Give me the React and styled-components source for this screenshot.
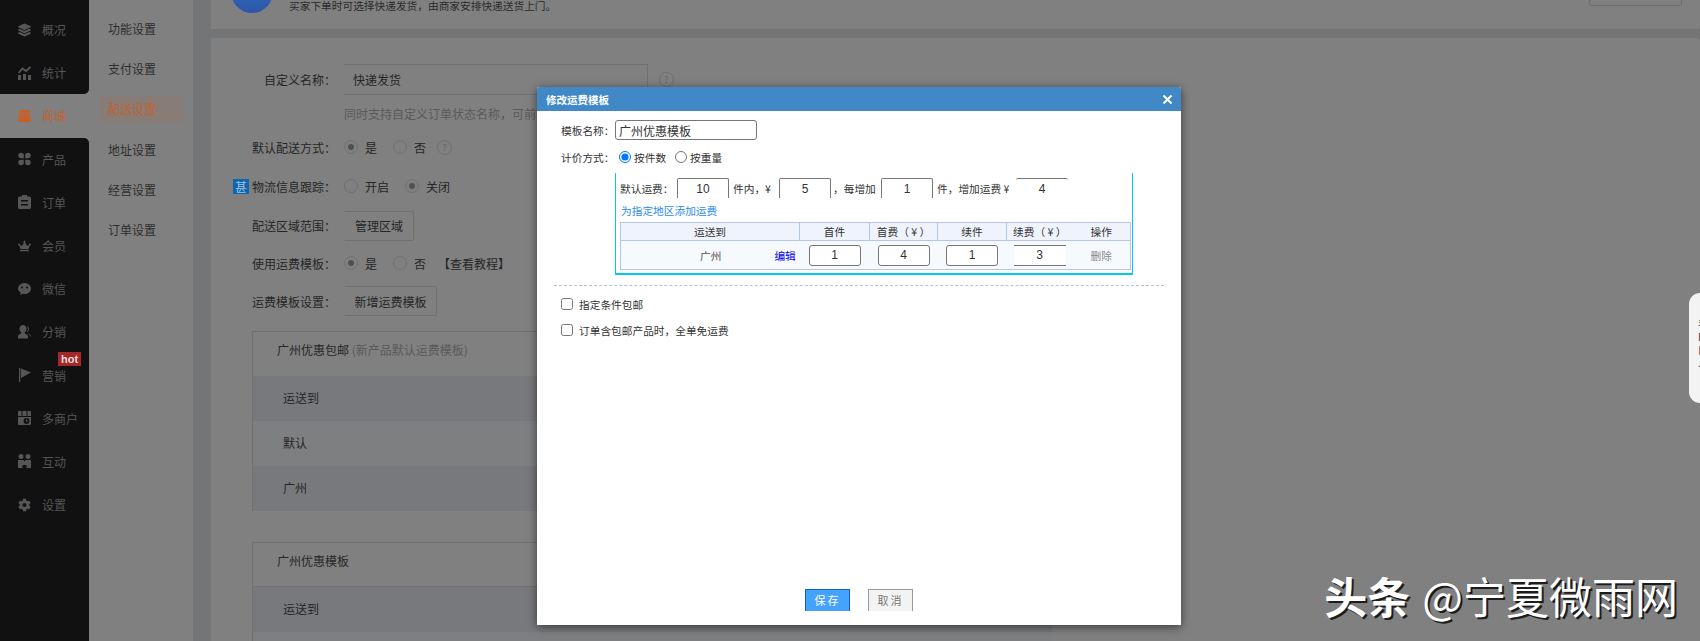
import React from 'react'
import styled, { createGlobalStyle } from 'styled-components'
import { FaLayerGroup, FaCrown, FaCog } from 'react-icons/fa'

const Global = createGlobalStyle`
  html, body { margin:0; padding:0; height:100%; overflow:hidden; background:#808080; }
  body { font-family:"Noto Sans CJK SC","Liberation Sans",sans-serif; font-size:12px; color:#262626; text-spacing-trim:space-all; }
  * { box-sizing:border-box; }
`

const Page = styled.div`
  position:relative;
  display:flex;
  width:1700px;
  height:641px;
  overflow:hidden;
`

/* left dark nav */
const Sidebar = styled.div`
  width:89px;
  flex:none;
  padding-top:8px;
  background:#111;
`
const NavList = styled.div`
  background:#808080;
`
const NavItem = styled.div`
  position:relative;
  display:flex;
  align-items:center;
  gap:11px;
  height:43.2px;
  padding-left:18px;
  font-size:12px;
  color:${p => (p.$active ? '#c4622f' : '#565656')};
  background:${p => (p.$active ? '#808080' : '#111')};
  border-bottom-right-radius:${p => (p.$corner === 'bottom' ? '5px' : '0')};
  border-top-right-radius:${p => (p.$corner === 'top' ? '5px' : '0')};
  svg { width:13px; height:14px; flex:none; }
`
const Hot = styled.span`
  position:absolute;
  left:58px;
  top:-2px;
  width:23px;
  height:14px;
  background:#a62727;
  color:#e8dede;
  font:bold 11px/14px "Liberation Sans",sans-serif;
  text-align:center;
`

/* second level menu */
const SubMenu = styled.div`
  width:104px;
  flex:none;
  padding:16px 10px 0;
  background:#808080;
`
const SubItem = styled.div`
  height:26.2px;
  margin-bottom:14px;
  padding-left:9px;
  border-radius:3px;
  font-size:12px;
  line-height:26px;
  color:${p => (p.$active ? '#c4622f' : '#2e2e2e')};
  background:${p => (p.$active ? '#877c76' : 'transparent')};
`

const Main = styled.div`
  flex:1;
  min-width:0;
  padding-left:18px;
  background:#747577;
`
const TopCard = styled.div`
  display:flex;
  align-items:flex-end;
  height:29px;
  padding:0 18px 16px 20px;
  overflow:hidden;
  background:#808080;
  border-bottom-right-radius:3px;
`
const Circle = styled.div`
  width:42px;
  height:42px;
  flex:none;
  border-radius:50%;
  background:linear-gradient(#3a78c4,#2b55a8);
`
const TopText = styled.div`
  flex:1;
  margin-left:16px;
  font-size:10.7px;
  line-height:14px;
  color:#2a2a2a;
  white-space:nowrap;
`
const TopBtn = styled.div`
  width:93px;
  height:30px;
  margin-bottom:-9px;
  transform:translateY(-16px);
  border:1px solid #6e6e6e;
  border-radius:3px;
`

const Card = styled.div`
  height:603px;
  margin-top:9px;
  padding-top:26px;
  overflow:hidden;
  background:#808080;
  border-top-right-radius:3px;
`
const FormRow = styled.div`
  display:flex;
  align-items:center;
  height:${p => p.$h}px;
`
const Label = styled.div`
  display:flex;
  align-items:center;
  justify-content:flex-end;
  width:125px;
  margin-right:8px;
  flex:none;
  color:#262626;
`
const Tag = styled.span`
  width:16px;
  height:15px;
  margin-right:3px;
  background:#1066ae;
  color:#9fc2e0;
  font-size:12px;
  line-height:15px;
  text-align:center;
`
const NameBox = styled.div`
  width:304px;
  height:31px;
  padding-left:8px;
  border:1px solid #707070;
  border-left-color:transparent;
  line-height:29px;
`
const Hint = styled.div`
  color:#5a5a5a;
`
const Dot = styled.span`
  position:relative;
  display:inline-block;
  width:14px;
  height:14px;
  flex:none;
  margin-right:${p => p.$mr || 7}px;
  border:1px solid #707070;
  border-radius:50%;
  &::after {
    content:'';
    display:${p => (p.$on ? 'block' : 'none')};
    position:absolute;
    left:3px;
    top:3px;
    width:6px;
    height:6px;
    border-radius:50%;
    background:#505050;
  }
`
const RadioText = styled.span`
  width:${p => p.$w || 29}px;
  flex:none;
`
const HelpDot = styled.span`
  width:15px;
  height:15px;
  flex:none;
  margin-left:${p => p.$ml || 0}px;
  border:1px solid #707070;
  border-radius:50%;
  color:#666;
  font-size:9px;
  line-height:13px;
  text-align:center;
`
const OutBtn = styled.div`
  display:flex;
  align-items:center;
  justify-content:center;
  width:${p => p.$w}px;
  height:30px;
  border:1px solid #707070;
  border-left-color:transparent;
  border-radius:2px;
`

const TplTable = styled.div`
  width:800px;
  margin:${p => p.$mt}px 0 0 41px;
  border-top:1px solid #707070;
  border-left:1px solid #707070;
`
const TplTitle = styled.div`
  height:44px;
  padding-left:24px;
  line-height:36px;
  border-bottom:${p => (p.$line ? '1px solid #707070' : 'none')};
  span { color:#5a5a5a; }
`
const TplRow = styled.div`
  height:45px;
  padding-left:30px;
  line-height:44px;
  background:${p => (p.$dark ? '#78797c' : '#7e7f80')};
`

/* the dialog lies over the page */
const Modal = styled.div`
  position:absolute;
  left:537px;
  top:87px;
  display:flex;
  flex-direction:column;
  width:644px;
  height:538px;
  background:#fff;
  border-radius:2px 2px 0 0;
  box-shadow:0 2px 10px rgba(0,0,0,.55);
  font-size:10.7px;
  color:#333;
`
const ModalHead = styled.div`
  display:flex;
  align-items:center;
  justify-content:space-between;
  height:24px;
  padding:0 8px 0 9px;
  background:#4088c6;
  color:#fff;
  font-size:10.5px;
  font-weight:bold;
  border-radius:2px 2px 0 0;
`
const CloseIcon = styled.svg`
  width:11px;
  height:11px;
`
const NameRow = styled.div`
  display:flex;
  align-items:center;
  height:20px;
  margin-top:9px;
  padding-left:24px;
`
const RowLabel = styled.span`
  width:54px;
  flex:none;
`
const NameInput = styled.input`
  width:142px;
  height:20px;
  padding:0 3px;
  border:1px solid #767676;
  border-radius:3px;
  font:12px "Noto Sans CJK SC",sans-serif;
  color:#333;
  outline:none;
`
const PriceRow = styled.div`
  display:flex;
  align-items:center;
  height:20px;
  margin-top:7px;
  margin-bottom:1px;
  padding-left:24px;
`
const ModalRadio = styled.input`
  width:12px;
  height:12px;
  margin:0 3px 0 ${p => p.$ml || 0}px;
`
const FeeBox = styled.div`
  width:518px;
  height:102px;
  margin:5px 0 0 78px;
  padding:5px 0 0 4px;
  border:solid #00c8f0;
  border-width:0 1px 2px 1px;
`
const FeeRow = styled.div`
  display:flex;
  align-items:center;
  height:20px;
`
const FeeText = styled.span`
  width:${p => p.$w}px;
  flex:none;
  white-space:nowrap;
  padding-left:${p => p.$pl || 0}px;
`
const FeeInput = styled.input`
  width:52px;
  height:20px;
  flex:none;
  padding:0;
  border:solid #767676;
  border-width:1px ${p => (p.$open ? '0' : '1px')} 0;
  border-radius:2px 2px 0 0;
  text-align:center;
  font:12px "Liberation Sans",sans-serif;
  color:#333;
  outline:none;
  background:transparent;
`
const AddLink = styled.div`
  height:23px;
  margin-top:1px;
  padding-left:1px;
  line-height:24px;
  color:#2a8cec;
`
const AreaTable = styled.table`
  width:510px;
  table-layout:fixed;
  border-collapse:collapse;
  border:1px solid #b5c6ea;
  th {
    height:18px;
    padding:0;
    font-weight:normal;
    background:#eef3fc;
    border-bottom:1px solid #b5c6ea;
    border-right:1px solid #b5c6ea;
    color:#333;
  }
  th:nth-child(n+5) { border-right:0; }
  td {
    height:29px;
    padding:0;
    text-align:center;
    background:#f6f9fe;
  }
`
const PlaceCell = styled.div`
  display:flex;
  align-items:center;
  padding-left:79px;
  gap:53px;
  color:#555;
`
const EditLink = styled.span`
  color:#0000ee;
`
const CellInput = styled.input`
  display:block;
  width:52px;
  height:21px;
  margin:0 auto;
  padding:0;
  border:1px solid #767676;
  border-width:${p => (p.$open ? '1px 0' : '1px')};
  border-radius:${p => (p.$open ? '0' : '3px')};
  text-align:center;
  font:12px "Liberation Sans",sans-serif;
  color:#333;
  background:#fff;
  outline:none;
`
const Remove = styled.span`
  color:#888;
`
const Dashed = styled.div`
  margin:10px 17px 0;
  border-top:1px dashed #b9c4d0;
`
const CheckRow = styled.label`
  display:flex;
  align-items:center;
  height:14px;
  margin:${p => p.$mt}px 0 0 24px;
`
const Check = styled.input`
  width:12px;
  height:12px;
  margin:0 6px 0 0;
`
const ModalFoot = styled.div`
  display:flex;
  justify-content:center;
  gap:18px;
  margin-top:auto;
  padding-bottom:14px;
`
const SaveBtn = styled.div`
  width:45px;
  height:22px;
  border:solid ${p => (p.$ghost ? '#999' : '#0a66c0')};
  border-width:1px 1px 0;
  background:${p => (p.$ghost ? '#f3f3f3' : '#46a2ff')};
  color:${p => (p.$ghost ? '#777' : '#fff')};
  font-size:11px;
  letter-spacing:2px;
  line-height:21px;
  text-align:center;
`

const SideTab = styled.div`
  position:absolute;
  right:0;
  top:293px;
  width:11px;
  height:110px;
  padding:24px 0 0 9px;
  overflow:hidden;
  background:#f3f3f3;
  border-radius:14px 0 0 14px;
  font-size:10px;
  line-height:13px;
  color:#444;
  white-space:nowrap;
`
const Watermark = styled.div`
  position:absolute;
  right:22px;
  top:569px;
  display:flex;
  align-items:center;
  font-size:43px;
  line-height:52px;
  color:#fff;
  text-shadow:2px 2px 0 #1c1c1c;
  white-space:nowrap;
  b { font-weight:bold; margin-right:12px; }
`

const StatIcon = () => (
  <svg viewBox="0 0 13 14">
    <path fill="currentColor" d="M0 9h3v5H0zM5 8h3v6H5zM10 9h3v5h-3z" />
    <path fill="none" stroke="currentColor" strokeWidth="1.800" d="M.5 7L4.500 2.500 8 5l4.500-4" />
  </svg>
)
const BagIcon = () => (
  <svg viewBox="0 0 13 14">
    <path fill="currentColor" fillRule="evenodd" d="M1.500 1h10L13 13H0zM4 4.200v.8h5v-.8z" />
  </svg>
)
const PetalIcon = () => (
  <svg viewBox="0 0 14 14">
    <path fill="currentColor" d="M3.300.300a3 3 0 0 1 3 3v3h-3a3 3 0 0 1 0-6zM10.700.300a3 3 0 0 1 0 6h-3v-3a3 3 0 0 1 3-3zM3.300 13.700a3 3 0 0 1 0-6h3v3a3 3 0 0 1-3 3zM10.700 13.700a3 3 0 0 1-3-3v-3h3a3 3 0 0 1 0 6z" />
  </svg>
)
const ClipIcon = () => (
  <svg viewBox="0 0 13 14">
    <path fill="currentColor" fillRule="evenodd" d="M4 0h5v1.500h2.500A1.500 1.500 0 0 1 13 3v9.500a1.500 1.500 0 0 1-1.500 1.500h-10A1.500 1.500 0 0 1 0 12.500V3a1.500 1.500 0 0 1 1.500-1.500H4zM3 5v1.500h7V5zM3 9v1.500h7V9z" />
  </svg>
)
const BubbleIcon = () => (
  <svg viewBox="0 0 14 14">
    <path fill="currentColor" fillRule="evenodd" d="M7 0.500c3.800 0 7 2.700 7 6s-3.200 6-7 6c-.7 0-1.300-.1-2-.3L2.500 13.500l.2-2.600C1 9.800 0 8.300 0 6.500c0-3.300 3.200-6 7-6zM4.300 4.300a1.100 1.100 0 1 0 0 2.200 1.100 1.100 0 0 0 0-2.200zm5.400 0a1.100 1.100 0 1 0 0 2.200 1.100 1.100 0 0 0 0-2.200z" />
  </svg>
)
const PeopleIcon = () => (
  <svg viewBox="0 0 13 14">
    <path fill="currentColor" d="M5 0a3.500 3.500 0 0 1 3.500 3.800c0 1.600-.8 3-1.800 3.700v1c2 .5 3.300 1.500 3.300 3v2H0v-2c0-1.500 1.300-2.500 3.300-3v-1C2.300 6.800 1.500 5.400 1.500 3.800A3.500 3.500 0 0 1 5 0z" />
    <path fill="none" stroke="currentColor" d="M9.500 1.500c1.200 1.500 1.200 4-.2 5.500M10.500 9c1.200.4 2 1.200 2 2.500" />
  </svg>
)
const PennantIcon = () => (
  <svg viewBox="0 0 13 14">
    <path fill="currentColor" d="M1 0h1.300v14H1zM3 .500L13 4.500 3 10z" />
  </svg>
)
const ShopIcon = () => (
  <svg viewBox="0 0 13 14">
    <path fill="currentColor" fillRule="evenodd" d="M1 0h2.500v5H0V1a1 1 0 0 1 1-1zM4.500 0h4v5h-4zM9.500 0H12a1 1 0 0 1 1 1v4H9.500zM0 6h13v7a1 1 0 0 1-1 1H1a1 1 0 0 1-1-1zM8.500 7a3 3 0 1 0 0 6 3 3 0 0 0 0-6z" />
    <path fill="none" stroke="currentColor" d="M8.500 8.300v1.900h1.500" />
  </svg>
)
const PairIcon = () => (
  <svg viewBox="0 0 13 14">
    <circle cx="3" cy="2.500" r="2.500" fill="currentColor" />
    <circle cx="10" cy="2.500" r="2.500" fill="currentColor" />
    <path fill="currentColor" d="M0 6h5.500l1 1.500L7.500 6H13v8H8.500v-3h-4v3H0z" />
  </svg>
)

const navItems = [
  { text: '概况', icon: <FaLayerGroup /> },
  { text: '统计', icon: <StatIcon />, corner: 'bottom' },
  { text: '商城', icon: <BagIcon />, active: true },
  { text: '产品', icon: <PetalIcon />, corner: 'top' },
  { text: '订单', icon: <ClipIcon /> },
  { text: '会员', icon: <FaCrown /> },
  { text: '微信', icon: <BubbleIcon /> },
  { text: '分销', icon: <PeopleIcon /> },
  { text: '营销', icon: <PennantIcon />, hot: true },
  { text: '多商户', icon: <ShopIcon /> },
  { text: '互动', icon: <PairIcon /> },
  { text: '设置', icon: <FaCog /> },
]
const subItems = ['功能设置', '支付设置', '配送设置', '地址设置', '经营设置', '订单设置']
const noop = () => {}

export default function App() {
  return (
    <Page>
      <Global />
      <Sidebar>
        <NavList>
          {navItems.map(n => (
            <NavItem key={n.text} $active={n.active} $corner={n.corner}>
              {n.icon}
              {n.text}
              {n.hot && <Hot>hot</Hot>}
            </NavItem>
          ))}
        </NavList>
      </Sidebar>
      <SubMenu>
        {subItems.map(s => (
          <SubItem key={s} $active={s === '配送设置'}>{s}</SubItem>
        ))}
      </SubMenu>
      <Main>
        <TopCard>
          <Circle />
          <TopText>买家下单时可选择快递发货，由商家安排快递送货上门。</TopText>
          <TopBtn />
        </TopCard>
        <Card>
          <FormRow $h={31}>
            <Label>自定义名称：</Label>
            <NameBox>快递发货</NameBox>
            <HelpDot $ml={11}>?</HelpDot>
          </FormRow>
          <FormRow $h={36}>
            <Label />
            <Hint>同时支持自定义订单状态名称，可前往订单设置中修改</Hint>
          </FormRow>
          <FormRow $h={32}>
            <Label>默认配送方式：</Label>
            <Dot $on />
            <RadioText $w={28}>是</RadioText>
            <Dot />
            <RadioText $w={23}>否</RadioText>
            <HelpDot>?</HelpDot>
          </FormRow>
          <FormRow $h={46}>
            <Label><Tag>甚</Tag>物流信息跟踪：</Label>
            <Dot />
            <RadioText $w={40}>开启</RadioText>
            <Dot $on />
            <RadioText>关闭</RadioText>
          </FormRow>
          <FormRow $h={33}>
            <Label>配送区域范围：</Label>
            <OutBtn $w={70}>管理区域</OutBtn>
          </FormRow>
          <FormRow $h={42}>
            <Label>使用运费模板：</Label>
            <Dot $on />
            <RadioText $w={28}>是</RadioText>
            <Dot />
            <RadioText $w={24}>否</RadioText>
            <span>【查看教程】</span>
          </FormRow>
          <FormRow $h={34}>
            <Label>运费模板设置：</Label>
            <OutBtn $w={93}>新增运费模板</OutBtn>
          </FormRow>
          <TplTable $mt={13}>
            <TplTitle>广州优惠包邮 <span>(新产品默认运费模板)</span></TplTitle>
            <TplRow $dark>运送到</TplRow>
            <TplRow>默认</TplRow>
            <TplRow $dark>广州</TplRow>
          </TplTable>
          <TplTable $mt={31}>
            <TplTitle $line>广州优惠模板</TplTitle>
            <TplRow $dark>运送到</TplRow>
            <TplRow />
          </TplTable>
        </Card>
      </Main>

      <Modal>
        <ModalHead>
          修改运费模板
          <CloseIcon viewBox="0 0 11 11">
            <path d="M1.500 1.500l8 8M9.500 1.500l-8 8" stroke="#fff" strokeWidth="2" />
          </CloseIcon>
        </ModalHead>
        <NameRow>
          <RowLabel>模板名称：</RowLabel>
          <NameInput value="广州优惠模板" onChange={noop} />
        </NameRow>
        <PriceRow>
          <RowLabel>计价方式：</RowLabel>
          <ModalRadio type="radio" name="way" defaultChecked $ml={4} />
          <span>按件数</span>
          <ModalRadio type="radio" name="way" $ml={9} />
          <span>按重量</span>
        </PriceRow>
        <FeeBox>
          <FeeRow>
            <FeeText $w={57}>默认运费：</FeeText>
            <FeeInput value="10" onChange={noop} />
            <FeeText $w={50} $pl={4}>件内，¥</FeeText>
            <FeeInput value="5" onChange={noop} />
            <FeeText $w={50} $pl={2}>，每增加</FeeText>
            <FeeInput value="1" onChange={noop} />
            <FeeText $w={83} $pl={4}>件，增加运费 ¥</FeeText>
            <FeeInput value="4" onChange={noop} $open />
          </FeeRow>
          <AddLink>为指定地区添加运费</AddLink>
          <AreaTable>
            <colgroup>
              <col style={{ width: 179 }} />
              <col style={{ width: 70 }} />
              <col style={{ width: 68 }} />
              <col style={{ width: 69 }} />
              <col style={{ width: 66 }} />
              <col style={{ width: 58 }} />
            </colgroup>
            <thead>
              <tr>
                <th>运送到</th>
                <th>首件</th>
                <th>首费（ ¥ ）</th>
                <th>续件</th>
                <th>续费（ ¥ ）</th>
                <th>操作</th>
              </tr>
            </thead>
            <tbody>
              <tr>
                <td><PlaceCell>广州<EditLink>编辑</EditLink></PlaceCell></td>
                <td><CellInput value="1" onChange={noop} /></td>
                <td><CellInput value="4" onChange={noop} /></td>
                <td><CellInput value="1" onChange={noop} /></td>
                <td><CellInput value="3" onChange={noop} $open /></td>
                <td><Remove>删除</Remove></td>
              </tr>
            </tbody>
          </AreaTable>
        </FeeBox>
        <Dashed />
        <CheckRow $mt={11}><Check type="checkbox" />指定条件包邮</CheckRow>
        <CheckRow $mt={12}><Check type="checkbox" />订单含包邮产品时，全单免运费</CheckRow>
        <ModalFoot>
          <SaveBtn>保存</SaveBtn>
          <SaveBtn $ghost>取消</SaveBtn>
        </ModalFoot>
      </Modal>

      <SideTab>
        <div>手</div>
        <div>D</div>
        <div>口</div>
        <div>人</div>
      </SideTab>
      <Watermark><b>头条</b>@宁夏微雨网</Watermark>
    </Page>
  )
}
